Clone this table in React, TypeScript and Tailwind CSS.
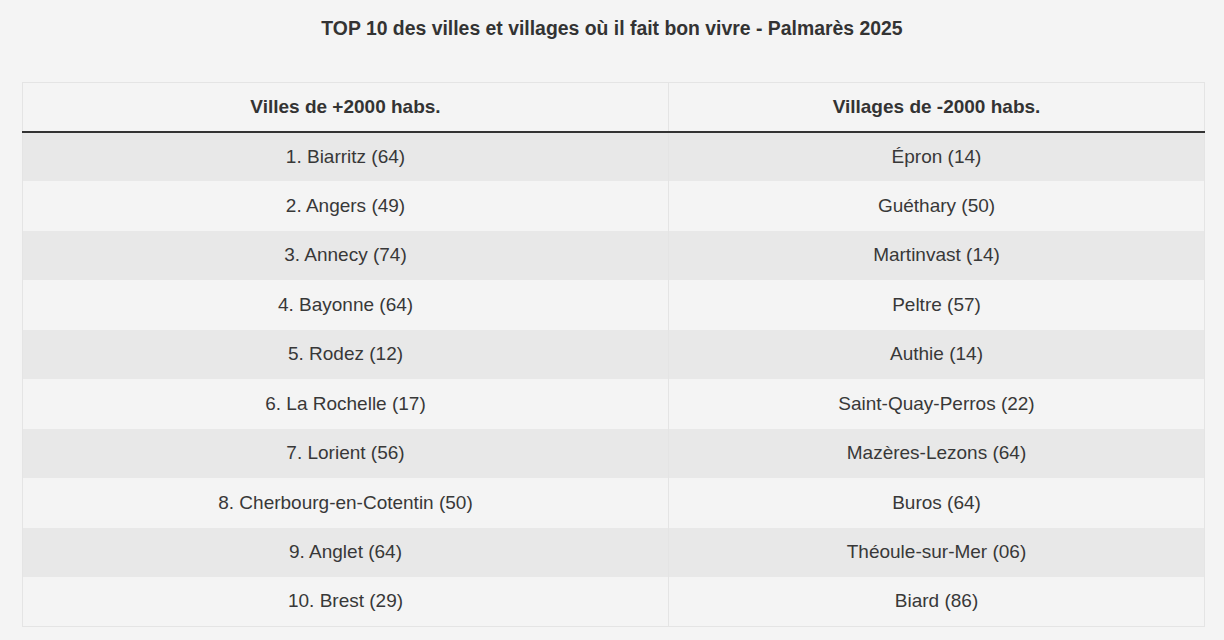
const villes = [
  "1. Biarritz (64)",
  "2. Angers (49)",
  "3. Annecy (74)",
  "4. Bayonne (64)",
  "5. Rodez (12)",
  "6. La Rochelle (17)",
  "7. Lorient (56)",
  "8. Cherbourg-en-Cotentin (50)",
  "9. Anglet (64)",
  "10. Brest (29)",
];

const villages = [
  "Épron (14)",
  "Guéthary (50)",
  "Martinvast (14)",
  "Peltre (57)",
  "Authie (14)",
  "Saint-Quay-Perros (22)",
  "Mazères-Lezons (64)",
  "Buros (64)",
  "Théoule-sur-Mer (06)",
  "Biard (86)",
];

export default function App() {
  return (
    <div className="min-h-screen bg-[#f4f4f4] text-[#383838] font-['Liberation_Sans',Arial,sans-serif]">
      <h1 className="pt-[16px] text-center text-[19.4px] font-bold leading-[24px] text-[#333]">
        TOP 10 des villes et villages où il fait bon vivre - Palmarès 2025
      </h1>

      <div className="mx-[22px] mt-[42px] w-[1183px]">
        <table className="w-full border-collapse border border-[#e4e4e4] bg-[#f4f4f4]">
          <thead>
            <tr className="h-[49px] border-b-2 border-[#333]">
              <th className="w-[646px] border-r border-[#e4e4e4] text-center text-[19px] font-bold text-[#333]">
                Villes de +2000 habs.
              </th>
              <th className="text-center text-[19px] font-bold text-[#333]">Villages de -2000 habs.</th>
            </tr>
          </thead>
          <tbody>
            {villes.map((v, i) => (
              <tr key={i} className={`h-[49.5px] ${i % 2 === 0 ? "bg-[#e8e8e8]" : "bg-[#f4f4f4]"}`}>
                <td className="border-r border-[#e4e4e4] text-center text-[19px]">{v}</td>
                <td className="text-center text-[19px]">{villages[i]}</td>
              </tr>
            ))}
          </tbody>
        </table>
      </div>
    </div>
  );
}
